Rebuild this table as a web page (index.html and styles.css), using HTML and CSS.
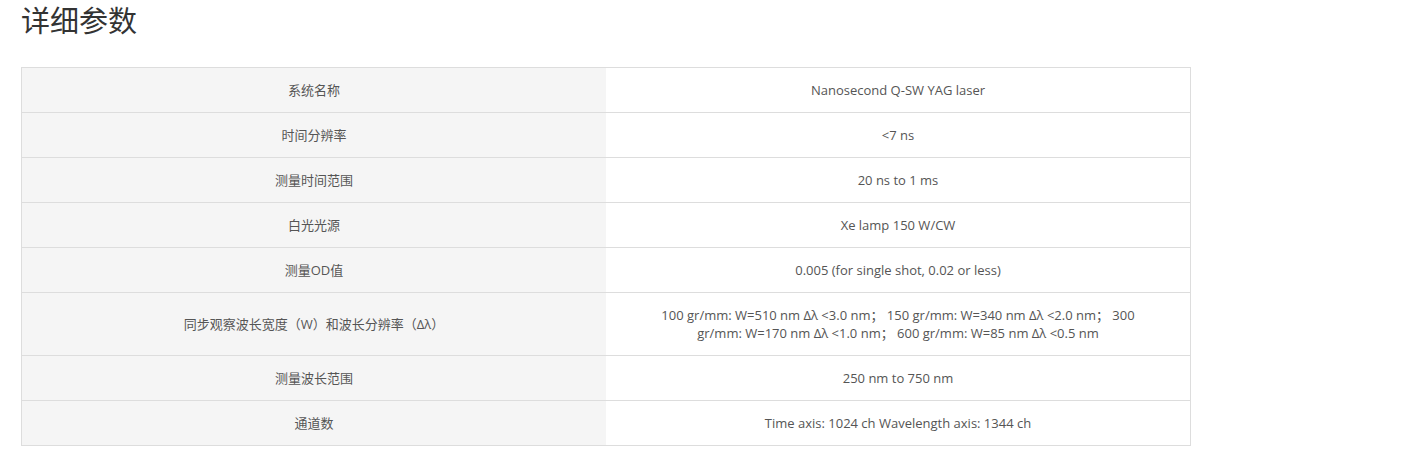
FILE: index.html
```html
<!DOCTYPE html>
<html lang="zh">
<head>
<meta charset="utf-8">
<title>详细参数</title>
<link rel="stylesheet" href="styles.css">
</head>
<body>
<div class="page">
  <h2 class="title">详细参数</h2>
  <table class="params">
    <tbody>
      <tr><td class="k">系统名称</td><td class="v">Nanosecond Q-SW YAG laser</td></tr>
      <tr><td class="k">时间分辨率</td><td class="v">&lt;7 ns</td></tr>
      <tr><td class="k">测量时间范围</td><td class="v">20 ns to 1 ms</td></tr>
      <tr><td class="k">白光光源</td><td class="v">Xe lamp 150 W/CW</td></tr>
      <tr><td class="k">测量OD值</td><td class="v">0.005 (for single shot, 0.02 or less)</td></tr>
      <tr><td class="k">同步观察波长宽度（W）和波长分辨率（Δλ）</td><td class="v">100 gr/mm: W=510 nm Δλ &lt;3.0 nm； 150 gr/mm: W=340 nm Δλ &lt;2.0 nm； 300 gr/mm: W=170 nm Δλ &lt;1.0 nm； 600 gr/mm: W=85 nm Δλ &lt;0.5 nm</td></tr>
      <tr><td class="k">测量波长范围</td><td class="v">250 nm to 750 nm</td></tr>
      <tr><td class="k">通道数</td><td class="v">Time axis: 1024 ch Wavelength axis: 1344 ch</td></tr>
    </tbody>
  </table>
</div>
</body>
</html>
```
FILE: styles.css
```css
html, body {
  margin: 0;
  padding: 0;
  background: #fff;
}
.page {
  padding: 0 21px;
  font-family: "Open Sans", "Noto Sans CJK SC", sans-serif;
}
.title {
  margin: 0;
  padding-top: 2px;
  height: 65px;
  font-size: 29px;
  line-height: 38px;
  font-weight: normal;
  color: #333;
}
.params {
  width: 1170px;
  border-collapse: collapse;
  table-layout: fixed;
  border: 1px solid #ddd;
  font-size: 13px;
  line-height: 18px;
  color: #555;
}
.params td {
  border-top: 1px solid #ddd;
  padding: 13px 45px;
  text-align: center;
  vertical-align: middle;
}
.params td.k {
  background: #f5f5f5;
}
.params td.v {
  background: #fff;
}
```
